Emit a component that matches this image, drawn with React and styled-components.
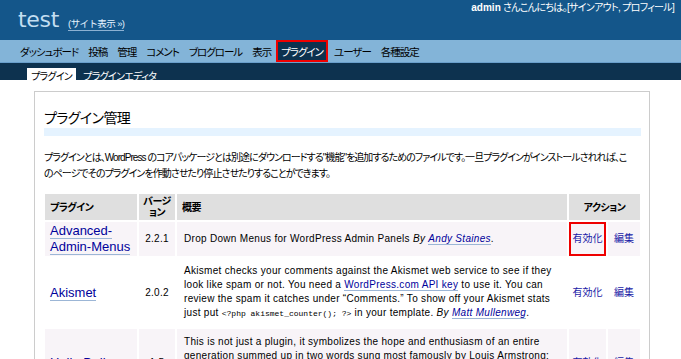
import React from 'react'
import styled, { createGlobalStyle } from 'styled-components'

const GlobalStyle = createGlobalStyle`
  body {
    margin: 0;
    background: #fff;
    color: #333;
    font-family: "Liberation Sans", "Noto Sans CJK JP", sans-serif;
    font-feature-settings: "palt";
  }
  a {
    color: #00019b;
    text-decoration: none;
  }
`

const Head = styled.div`
  display: flex;
  justify-content: space-between;
  align-items: flex-start;
  height: 40px;
  background: #14568a;
  color: #c3def1;
`

const Title = styled.h1`
  margin: 6px 0 0 18px;
  display: flex;
  align-items: baseline;
  gap: 9px;
  font: normal 22px/28px "DejaVu Sans", sans-serif;
  letter-spacing: -0.3px;
  color: #c3def1;
`

const ViewSite = styled.a`
  font-size: 9.5px;
  line-height: 12px;
  letter-spacing: -0.6px;
  color: #e5f3ff;
  border-bottom: 1px solid #8cb1d3;
  font-family: "Liberation Sans", "Noto Sans CJK JP", sans-serif;
`

const UserInfo = styled.div`
  margin: 2px 7px 0 0;
  font-size: 10px;
  line-height: 12px;
  letter-spacing: -0.7px;
  color: #fff;
  b { font-weight: bold; letter-spacing: 0; }
`

const Menu = styled.ul`
  display: flex;
  margin: 0;
  padding: 0 0 0 15px;
  list-style: none;
  height: 22px;
  background: #83b4d8;
  border-bottom: 1px solid #6a9fcb;
`

const MenuItem = styled.li`
  display: flex;
  align-items: center;
  padding: 0 3px;
  margin-right: ${p => (p.$current ? '1px' : '0')};
  border: 2px solid ${p => (p.$current ? '#ee0000' : 'transparent')};
  background: ${p => (p.$current ? '#0d324f' : 'transparent')};
  color: ${p => (p.$current ? '#fff' : '#000')};
  font-size: 10.5px;
  letter-spacing: -1px;
`

const SubMenu = styled.ul`
  display: flex;
  align-items: flex-end;
  margin: 0;
  padding: 0 0 0 27px;
  list-style: none;
  height: 17px;
  background: #0d324f;
`

const SubItem = styled.li`
  height: 14px;
  margin-bottom: -2px;
  padding: 0 4px;
  margin-right: 3px;
  display: flex;
  align-items: center;
  font-size: 10px;
  letter-spacing: -0.7px;
  background: ${p => (p.$current ? '#fff' : 'transparent')};
  color: ${p => (p.$current ? '#000' : '#fff')};
`

const Wrap = styled.div`
  margin: 11px 31px 0 34px;
  padding: 8px 8px 0 9px;
  border: 1px solid #ccc;
  border-bottom: none;
`

const Heading = styled.h2`
  margin: 8px 0 0;
  font-size: 14px;
  line-height: 20px;
  letter-spacing: -0.6px;
  font-weight: normal;
  color: #000;
  border-bottom: 8px solid #e5f3ff;
`

const Intro = styled.p`
  margin: 14px 0 10px;
  font-size: 10px;
  line-height: 16px;
  letter-spacing: -0.95px;
  color: #000;
`

const Table = styled.table`
  width: calc(100% + 2px);
  margin-left: -1px;
  border-spacing: 2px;
  table-layout: fixed;
  font-size: 10px;
  color: #000;
`

const Th = styled.th`
  height: 26px;
  padding: ${p => p.$pad || '0 5px'};
  background: #dfdfdf;
  font-weight: bold;
  line-height: 11px;
  letter-spacing: -0.5px;
  text-align: ${p => p.$align || 'left'};
`

const Row = styled.tr`
  background: ${p => (p.$alt ? '#f8f4f8' : '#fff')};
`

const Cell = styled.td`
  padding: ${p => p.$pad || '6px 7px'};
  line-height: 14px;
  letter-spacing: 0.3px;
  vertical-align: middle;
  text-align: ${p => p.$align || 'left'};
  outline: ${p => (p.$marked ? '2px solid #ee0000' : 'none')};
  outline-offset: -2px;
`

const Name = styled.a`
  font-size: 13px;
  line-height: 15px;
  letter-spacing: 0;
  border-bottom: 1px solid #9cb6d6;
`

const Link = styled.a`
  border-bottom: 1px solid #9cb6d6;
  font-style: ${p => (p.$italic ? 'italic' : 'normal')};
`

const Code = styled.code`
  font-family: "Liberation Mono", monospace;
  font-size: 8px;
  letter-spacing: 0;
`

const Action = styled.a`
  display: block;
  text-align: center;
  font-size: 10px;
  letter-spacing: 0;
  color: #1a1aa6;
`

const plugins = [
  {
    name: <>Advanced-<br />Admin-Menus</>,
    version: '2.2.1',
    desc: <>Drop Down Menus for WordPress Admin Panels <i>By</i> <Link $italic>Andy Staines</Link>.</>,
  },
  {
    name: 'Akismet',
    version: '2.0.2',
    desc: <>Akismet checks your comments against the Akismet web service to see if they look like spam or not. You need a <Link>WordPress.com API key</Link> to use it. You can review the spam it catches under “Comments.” To show off your Akismet stats just put <Code>&lt;?php akismet_counter(); ?&gt;</Code> in your template. <i>By</i> <Link $italic>Matt Mullenweg</Link>.</>,
  },
  {
    name: 'Hello Dolly',
    version: '1.5',
    desc: <>This is not just a plugin, it symbolizes the hope and enthusiasm of an entire generation summed up in two words sung most famously by Louis Armstrong: Hello, Dolly. When activated you will randomly see a lyric from Hello, Dolly in the upper right of your admin screen on every page. <i>By</i> <Link $italic>Matt Mullenweg</Link>.</>,
  },
]

const menu = ['ダッシュボード', '投稿', '管理', 'コメント', 'ブログロール', '表示', 'プラグイン', 'ユーザー', '各種設定']

const App = () => {
  return (
    <>
      <GlobalStyle />
      <Head>
        <Title>
          test <ViewSite>(サイト表示 »)</ViewSite>
        </Title>
        <UserInfo>
          <b>admin</b> さんこんにちは。[サインアウト, プロフィール]
        </UserInfo>
      </Head>
      <Menu>
        {menu.map(m => (
          <MenuItem key={m} $current={m === 'プラグイン'}>{m}</MenuItem>
        ))}
      </Menu>
      <SubMenu>
        <SubItem $current>プラグイン</SubItem>
        <SubItem>プラグインエディタ</SubItem>
      </SubMenu>
      <Wrap>
        <Heading>プラグイン管理</Heading>
        <Intro>
          プラグインとは、WordPress のコアパッケージとは別途にダウンロードする"機能"を追加するためのファイルです。一旦プラグインがインストールされれば、こ<br />
          のページでそのプラグインを作動させたり停止させたりすることができます。
        </Intro>
        <Table>
          <colgroup>
            <col style={{ width: 92 }} />
            <col style={{ width: 36 }} />
            <col />
            <col style={{ width: 37 }} />
            <col style={{ width: 32 }} />
          </colgroup>
          <thead>
            <tr>
              <Th>プラグイン</Th>
              <Th $align="center" $pad="0 1px">バージョン</Th>
              <Th>概要</Th>
              <Th $align="center" colSpan={2}>アクション</Th>
            </tr>
          </thead>
          <tbody>
            {plugins.map((p, i) => (
              <Row key={p.version} $alt={i % 2 === 0}>
                <Cell $pad="1px 5px"><Name>{p.name}</Name></Cell>
                <Cell $align="center" $pad="0">{p.version}</Cell>
                <Cell>{p.desc}</Cell>
                <Cell $align="center" $pad="0" $marked={i === 0}><Action>有効化</Action></Cell>
                <Cell $align="center" $pad="0"><Action>編集</Action></Cell>
              </Row>
            ))}
          </tbody>
        </Table>
      </Wrap>
    </>
  )
}

export default App
